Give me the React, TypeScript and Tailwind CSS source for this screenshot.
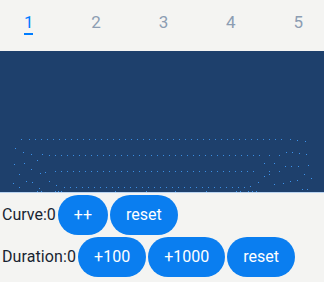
import React from "react";

const range = (a: number, b: number, s: number) => {
  const r: number[] = [];
  for (let x = a; x <= b; x += s) r.push(x);
  return r;
};

const rows: [number, number[]][] = [
  [88, [21, ...range(29, 281, 6), 290]],
  [104, [...range(49, 259, 6), 269, 279]],
  [120, [...range(55, 253, 6), 269, 279]],
  [136, range(64, 244, 6)],
];

const scattered: [number, number][] = [
  [15, 148], [23, 152], [31, 154], [42, 154], [37, 160], [24, 163], [14, 164], [31, 169],
  [40, 173], [45, 172], [19, 174], [26, 181], [32, 182], [49, 181], [13, 183], [56, 185],
  [19, 187], [39, 188], [37, 191], [23, 192], [26, 192], [30, 192], [41, 191], [44, 192],
  [47, 192], [50, 192], [55, 191], [58, 191], [61, 191], [115, 191], [146, 191], [175, 191],
  [206, 191], [236, 191], [240, 191], [248, 191], [252, 191], [256, 191], [259, 192],
  [263, 192], [267, 192], [271, 192], [275, 192], [279, 192], [283, 192], [287, 192],
  [291, 192], [295, 192], [258, 182], [250, 186], [264, 163], [274, 163], [269, 174],
  [264, 176], [274, 184], [283, 183], [290, 181], [297, 180], [304, 174], [311, 178],
  [308, 165], [298, 166], [291, 166], [285, 166], [306, 154], [299, 153], [292, 152],
  [286, 152], [297, 140], [305, 141], [302, 189], [307, 189], [311, 192],
];

function Particles() {
  return (
    <svg width="324" height="141" viewBox="0 0 324 141" className="block">
      {rows.map(([y, xs], i) =>
        xs.map((x) => (
          <rect key={`r${i}-${x}`} x={x} y={y} width="1" height="1" fill="#3b8ee2" />
        ))
      )}
      {scattered.map(([x, y], i) => (
        <rect key={`s${i}`} x={x} y={y - 51} width="1" height="1" fill="#3d92ea" />
      ))}
    </svg>
  );
}

function Btn({ children }: { children: React.ReactNode }) {
  return (
    <button className="h-10 px-4 rounded-full bg-[#0a7ef0] text-white text-[16px] leading-none shrink-0">
      {children}
    </button>
  );
}

export default function App() {
  const tabs = ["1", "2", "3", "4", "5"];
  return (
    <div
      className="w-[324px] h-[282px] bg-[#f4f4f2] overflow-hidden flex flex-col"
      style={{ fontFamily: "Roboto, 'Noto Sans', sans-serif" }}
    >
      <div className="h-[51px] flex items-start justify-between pl-[24px] pr-[21px]">
        {tabs.map((t, i) => (
          <div key={t} className="flex flex-col items-center pt-[12px]">
            <span
              className={`text-[17px] leading-[20px] ${i === 0 ? "text-[#007dff]" : "text-[#8c9db2]"}`}
            >
              {t}
            </span>
            {i === 0 ? (
              <div className="mt-[1px] w-[9px] h-[2px] bg-[#007dff]" />
            ) : (
              <div className="mt-[1px] h-[2px]" />
            )}
          </div>
        ))}
      </div>
      <div className="h-[141px] bg-[#1e406c]">
        <Particles />
      </div>
      <div className="h-[1px] bg-[#b9d3f0]" />
      <div className="flex flex-col gap-[2px] pt-[2px] pl-[1px]">
        <div className="flex items-center gap-[2px]">
          <span className="text-[16px] text-[#182431] pl-[1px]">Curve:0</span>
          <Btn>++</Btn>
          <Btn>reset</Btn>
        </div>
        <div className="flex items-center gap-[2px]">
          <span className="text-[16px] text-[#182431] pl-[1px] tracking-[0.1px]">Duration:0</span>
          <Btn>+100</Btn>
          <Btn>+1000</Btn>
          <Btn>reset</Btn>
        </div>
      </div>
    </div>
  );
}
